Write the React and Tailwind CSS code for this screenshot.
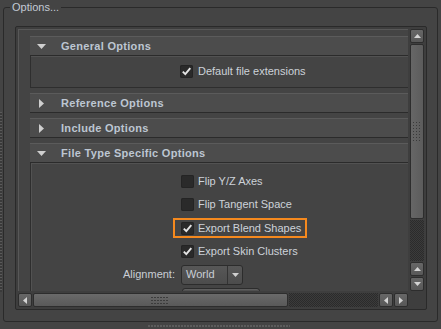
import React from 'react';

// Maya-style "Options..." group with a scrolled frame of collapsible sections

function Tri({ dir = 'down', color = '#cfcfcf' }) {
  if (dir === 'down')
    return (
      <svg width="9" height="5" viewBox="0 0 9 5">
        <polygon points="0,0 9,0 4.5,5" fill={color} />
      </svg>
    );
  if (dir === 'right')
    return (
      <svg width="5" height="9" viewBox="0 0 5 9">
        <polygon points="0,0 5,4.5 0,9" fill={color} />
      </svg>
    );
  if (dir === 'left')
    return (
      <svg width="4" height="7" viewBox="0 0 4 7">
        <polygon points="4,0 0,3.5 4,7" fill={color} />
      </svg>
    );
  if (dir === 'rightsm')
    return (
      <svg width="4" height="7" viewBox="0 0 4 7">
        <polygon points="0,0 4,3.5 0,7" fill={color} />
      </svg>
    );
  if (dir === 'up')
    return (
      <svg width="7" height="4" viewBox="0 0 7 4">
        <polygon points="0,4 3.5,0 7,4" fill={color} />
      </svg>
    );
  return (
    <svg width="7" height="4" viewBox="0 0 7 4">
      <polygon points="0,0 7,0 3.5,4" fill={color} />
    </svg>
  );
}

function Check({ on }) {
  return (
    <span className="flex h-[13px] w-[13px] shrink-0 items-center justify-center rounded-[2px] bg-[#2a2a2a] shadow-[inset_0_0_0_1px_#242424]">
      {on && (
        <svg width="11" height="11" viewBox="0 0 11 11">
          <path d="M1.8 5.6 4.3 8.2 9.3 2.2" fill="none" stroke="#e4e4e4" strokeWidth="1.9" />
        </svg>
      )}
    </span>
  );
}

function CheckRow({ label, on, highlight }) {
  return (
    <div className="flex h-[23.3px] items-center">
      <div className="w-[150px] shrink-0" />
      {highlight ? (
        <div className="-ml-[8px] flex h-[20px] items-center gap-[4px] border-2 border-[#f5891e] pl-[6px] pr-[4px]">
          <Check on={on} />
          <span className="text-[#cdd2d9]">{label}</span>
        </div>
      ) : (
        <div className="flex items-center gap-[4px]">
          <Check on={on} />
          <span className="text-[#cdd2d9]">{label}</span>
        </div>
      )}
    </div>
  );
}

function Header({ title, open }) {
  return (
    <div className="flex h-[20px] items-center border-t border-b border-t-[#5b5b5b] border-b-[#2b2b2b] bg-[#4c4c4c]">
      <span className="flex w-[22px] justify-center">
        <Tri dir={open ? 'down' : 'right'} />
      </span>
      <span className="ml-[9px] font-bold tracking-[0.3px] text-[#bdc6d2]">{title}</span>
    </div>
  );
}

function SBtn({ dir }) {
  return (
    <div className="flex h-[14px] w-[14px] shrink-0 items-center justify-center rounded-[2px] border border-[#2d2d2d] bg-gradient-to-b from-[#676767] to-[#585858]">
      <Tri dir={dir} color="#d4d4d4" />
    </div>
  );
}

function GripV() {
  return (
    <svg width="10" height="20" viewBox="0 0 10 20">
      {[0, 1, 2].map((c) =>
        [0, 1, 2, 3, 4, 5, 6].map((r) => (
          <rect key={c + '-' + r} x={1 + c * 3} y={r * 3} width="1" height="1" fill="#3a3a3a" />
        ))
      )}
    </svg>
  );
}

function GripH() {
  return (
    <svg width="19" height="8" viewBox="0 0 19 8">
      {[0, 1, 2, 3, 4, 5].map((c) =>
        [0, 1, 2].map((r) => (
          <rect key={c + '-' + r} x={c * 3} y={1 + r * 3} width="2" height="1" fill="#3c3c3c" />
        ))
      )}
    </svg>
  );
}

const checker =
  'bg-[repeating-conic-gradient(#3b3b3b_0_25%,#2b2b2b_0_50%)] bg-[length:2px_2px]';

export default function App() {
  return (
    <div
      className="flex h-[329px] w-[441px] flex-col overflow-hidden bg-[#444444] text-[11px] leading-[13px] text-[#cdd2d9]"
      style={{ fontFamily: '"Liberation Sans", Arial, sans-serif' }}
    >
      <div className="flex h-[323px]">
        {/* left resize grip */}
        <div className="w-[3px] shrink-0 pt-[112px]">
          <div className="h-[180px] w-[2px] bg-[repeating-linear-gradient(180deg,#5a5a5a_0_1px,#3a3a3a_1px_3px)]" />
        </div>

        <fieldset className="mt-[1px] h-[321px] w-[435px] rounded-[3px] border border-[#2a2a2a]">
          <legend className="ml-[6px] px-[2px] text-[#c3cad4]">Options...</legend>

          <div className="ml-[11px] mt-[12px] h-[284px] w-[412px] rounded-[2px] border border-[#2a2a2a] bg-[#3e3e3e] p-[2px]">
            <div className="grid h-full grid-cols-[390px_14px] grid-rows-[262px_14px] gap-[2px]">
              {/* viewport */}
              <div className="overflow-hidden border-l border-t border-[#585858] bg-[#444444] pl-[11px] pt-[6px]">
                <div className="w-[392px]">
                  <Header title="General Options" open />
                  <div className="flex h-[32px] items-center border border-t-0 border-[#2e2e2e] shadow-[inset_0_1px_0_#525252]">
                    <div className="w-[149px] shrink-0" />
                    <div className="flex items-center gap-[5px]">
                      <Check on />
                      <span>Default file extensions</span>
                    </div>
                  </div>

                  <div className="mt-[5px]">
                    <Header title="Reference Options" />
                  </div>
                  <div className="mt-[5px]">
                    <Header title="Include Options" />
                  </div>
                  <div className="mt-[5px]">
                    <Header title="File Type Specific Options" open />
                  </div>
                  <div className="h-[140px] border-l border-[#2e2e2e] pt-[7px] shadow-[inset_1px_1px_0_#525252]">
                    <CheckRow label="Flip Y/Z Axes" />
                    <CheckRow label="Flip Tangent Space" />
                    <CheckRow label="Export Blend Shapes" on highlight />
                    <CheckRow label="Export Skin Clusters" on />
                    <div className="flex h-[23.3px] items-center">
                      <div className="w-[147px] shrink-0 pr-[3px] text-right text-[#c9ced5]">Alignment:</div>
                      <div className="ml-[3px] flex h-[20px] w-[62px] items-center rounded-[3px] border border-[#2c2c2c] bg-gradient-to-b from-[#575757] to-[#4c4c4c]">
                        <span className="flex-1 pl-[4px] text-[#c9ced5]">World</span>
                        <span className="flex h-full w-[15px] items-center justify-center border-l border-[#333333]">
                          <Tri dir="dn" color="#cfcfcf" />
                        </span>
                      </div>
                    </div>
                    <div className="ml-[151px] mt-[2px] h-[20px] w-[78px] rounded-[3px] border border-[#2c2c2c] bg-[#505050] shadow-[inset_0_1px_0_#5e5e5e]" />
                  </div>
                </div>
              </div>

              {/* vertical scrollbar */}
              <div className="flex flex-col gap-[1px]">
                <SBtn dir="up" />
                <div className="flex h-[175px] items-center justify-center rounded-[2px] border border-[#2d2d2d] bg-gradient-to-r from-[#666666] to-[#5c5c5c]">
                  <GripV />
                </div>
                <div className={'flex-1 ' + checker} />
                <SBtn dir="up" />
                <SBtn dir="dn" />
              </div>

              {/* horizontal scrollbar */}
              <div className="flex gap-[1px]">
                <SBtn dir="left" />
                <div className="flex w-[255px] items-center justify-center rounded-[2px] border border-[#2d2d2d] bg-gradient-to-b from-[#6a6a6a] to-[#595959]">
                  <GripH />
                </div>
                <div className={'flex-1 ' + checker} />
                <SBtn dir="left" />
                <SBtn dir="rightsm" />
              </div>
              <div />
            </div>
          </div>
        </fieldset>
      </div>

      {/* bottom resize grip */}
      <div className="ml-[148px] mt-[2px] h-[2px] w-[142px] bg-[repeating-linear-gradient(90deg,#5c5c5c_0_2px,transparent_2px_3px)]" />
    </div>
  );
}
